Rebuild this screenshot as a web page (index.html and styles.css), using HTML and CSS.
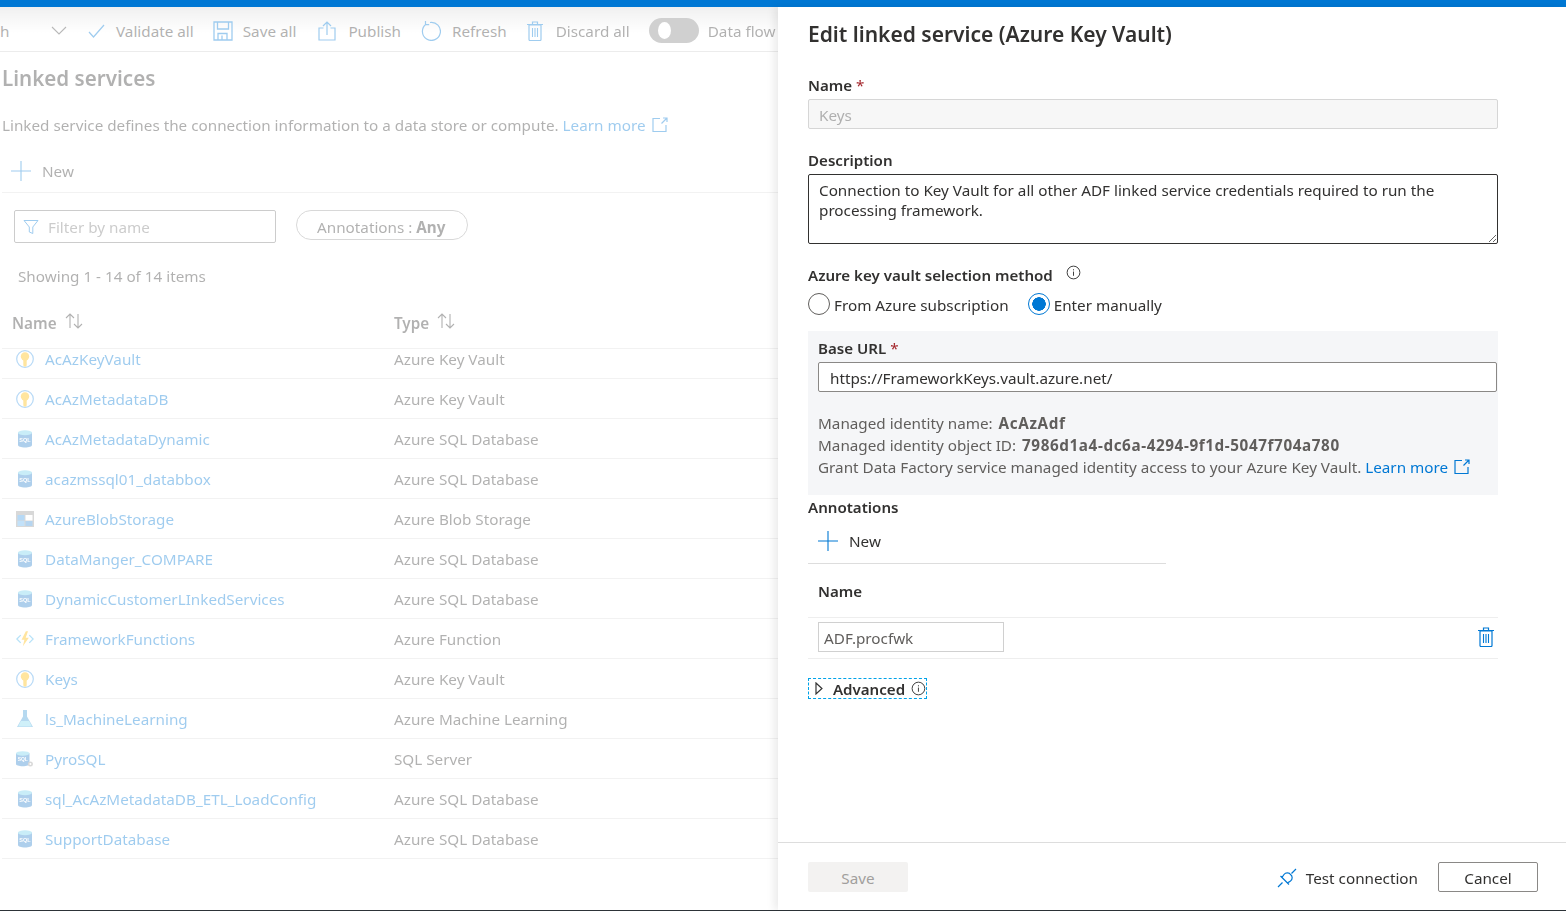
FILE: index.html
```html
<!DOCTYPE html>
<html lang="en">
<head>
  <meta charset="UTF-8">
  <meta name="viewport" content="width=device-width, initial-scale=1.0">
  <title>Edit linked service</title>
  <link rel="stylesheet" href="styles.css">
</head>
<body>
  <svg class="icon-defs" width="0" height="0">
    <defs>
      <symbol id="i-key" viewBox="0 0 18 18">
        <circle cx="9" cy="9" r="8.300" fill="#fff" stroke="#3f9be8" stroke-width="1.200"/>
        <circle cx="9" cy="6.500" r="4.200" fill="#ffb900"/>
        <path d="M7.300 9h3.400v6.500L9 17l-1.700-1.500z" fill="#ffb900"/>
      </symbol>
      <symbol id="i-sql" viewBox="0 0 18 18">
        <path d="M2 2.500v12.500c0 1.400 3 2.500 7 2.500s7-1.100 7-2.500V2.500z" fill="#2a80cc"/>
        <ellipse cx="9" cy="2.800" rx="7" ry="2.500" fill="#6fd0ec"/>
        <text x="9" y="12" class="sql-text">SQL</text>
      </symbol>
      <symbol id="i-sqlserver" viewBox="0 0 20 18">
        <path d="M0 2.500v12c0 1.400 3 2.500 7.500 2.500s7.500-1.100 7.500-2.500v-12z" fill="#2a80cc"/>
        <ellipse cx="7.500" cy="2.800" rx="7.500" ry="2.500" fill="#6fd0ec"/>
        <text x="7.500" y="11.500" class="sql-text">SQL</text>
        <circle cx="16" cy="14.500" r="2.800" fill="#999"/>
        <circle cx="16" cy="14.500" r="1.100" fill="#fff"/>
      </symbol>
      <symbol id="i-blob" viewBox="0 0 18 18">
        <path d="M0 1h18v16H0z" fill="#999"/>
        <path d="M1.500 5h7v5.500h-7z" fill="#3f9be8"/>
        <path d="M9.500 5h7v5.500h-7z" fill="#fff"/>
        <path d="M1.500 11h7v5h-7z" fill="#5fb0ee"/>
        <path d="M9.500 11h7v5h-7z" fill="#3f8fd6"/>
      </symbol>
      <symbol id="i-func" viewBox="0 0 21 18">
        <path d="M5.500 4.500 1 9l4.500 4.500M15.500 4.500 20 9l-4.500 4.500" fill="none" stroke="#3fb2ec" stroke-width="1.500"/>
        <path d="M11.500 0 6.500 10h3.300L8 17.500 15 7.500h-3.700L14 0z" fill="#ffb900"/>
      </symbol>
      <symbol id="i-flask" viewBox="0 0 18 18">
        <path d="M7 0h4v6.500l6 10.500H1l6-10.500z" fill="#3f9bd8"/>
        <path d="M4.800 11h8.400l2.600 5.500H2.200z" fill="#7fd6ef"/>
      </symbol>
      <symbol id="i-ext" viewBox="0 0 16 16">
        <path d="M8 1.500H1v13h13V8M9.500 6.500l5-5M11 1h4v4" fill="none" stroke="currentColor" stroke-width="1.200"/>
      </symbol>
      <symbol id="i-info" viewBox="0 0 16 16">
        <circle cx="8" cy="8" r="6.800" fill="none" stroke="currentColor"/>
        <path d="M8 7v4.500M8 4.500v1.200" fill="none" stroke="currentColor"/>
      </symbol>
      <symbol id="i-plus" viewBox="0 0 20 20">
        <path d="M10 0v20M0 10h20" fill="none" stroke="#0078d4" stroke-width="1.100"/>
      </symbol>
      <symbol id="i-trash" viewBox="0 0 16 20">
        <path d="M2 4h12v14.500a1 1 0 0 1-1 1H3a1 1 0 0 1-1-1zM0 3.500h16M5.500 3V1h5v2" fill="none" stroke="#0078d4" stroke-width="1.200"/>
        <path d="M5.500 7v9M8 7v9M10.500 7v9" fill="none" stroke="#0078d4" stroke-width="1.100"/>
      </symbol>
    </defs>
  </svg>

  <div class="topbar"></div>
  <div class="main">
    <div class="factory">
      <div class="toolbar">
        <span class="tool-cut">h</span>
        <svg class="chevron" width="16" height="9" viewBox="0 0 16 9"><path d="M1 1l7 7 7-7" fill="none" stroke="#444" stroke-width="1.100"/></svg>
        <span class="tool tool-validate">
          <svg width="17" height="14" viewBox="0 0 17 14"><path d="M1 8l4.500 5L16 1" fill="none" stroke="#0078d4" stroke-width="1.200"/></svg>
          Validate all
        </span>
        <span class="tool tool-save">
          <svg width="20" height="20" viewBox="0 0 20 20"><path d="M1 1h18v18H1zM4.500 1v7h11V1M5 19v-6.500h9V19M9 14.500V19" fill="none" stroke="#0078d4" stroke-width="1.300"/></svg>
          Save all
        </span>
        <span class="tool tool-publish">
          <svg width="18" height="20" viewBox="0 0 18 20"><path d="M5.500 7H1v12h16V7h-4.500M9 14V1M5 5l4-4 4 4" fill="none" stroke="#0078d4" stroke-width="1.200"/></svg>
          Publish
        </span>
        <span class="tool tool-refresh">
          <svg width="20" height="20" viewBox="0 0 20 20"><path d="M5 3.200a9 9 0 1 0 4-1.700M4.500 0v3.700h3.700" fill="none" stroke="#0078d4" stroke-width="1.200"/></svg>
          Refresh
        </span>
        <span class="tool tool-discard">
          <svg width="16" height="20" viewBox="0 0 16 20"><use href="#i-trash"/></svg>
          Discard all
        </span>
        <span class="toggle"><span class="toggle-knob"></span></span>
        <span class="tool tool-flow">Data flow</span>
      </div>

      <h1 class="page-title">Linked services</h1>
      <p class="page-desc">
        Linked service defines the connection information to a data store or compute.
        <a class="link">Learn more</a>
        <svg class="ext-icon" width="16" height="16"><use href="#i-ext"/></svg>
      </p>

      <div class="new-bar">
        <svg width="20" height="20"><use href="#i-plus"/></svg>
        <span>New</span>
      </div>

      <div class="filter-row">
        <div class="filter-box">
          <svg width="16" height="16" viewBox="0 0 16 16"><path d="M1 1.500h14L9.800 8v6.500l-3.500-1.500V8z" fill="none" stroke="#0078d4"/></svg>
          <span>Filter by name</span>
        </div>
        <div class="filter-pill">Annotations : <b>Any</b></div>
      </div>

      <div class="showing">Showing 1 - 14 of 14 items</div>

      <div class="grid-head">
        <span class="col-name">Name
          <svg width="18" height="16" viewBox="0 0 18 16"><path d="M5 15V1M1 5l4-4 4 4M13 1v14M9 11l4 4 4-4" fill="none" stroke="#333" stroke-width="1.100"/></svg>
        </span>
        <span>Type
          <svg width="18" height="16" viewBox="0 0 18 16"><path d="M5 15V1M1 5l4-4 4 4M13 1v14M9 11l4 4 4-4" fill="none" stroke="#333" stroke-width="1.100"/></svg>
        </span>
      </div>

      <div class="grid-body">
        <div class="row row-first"><a class="cell-name"><svg class="ls-icon"><use href="#i-key"/></svg>AcAzKeyVault</a><span>Azure Key Vault</span></div>
        <div class="row"><a class="cell-name"><svg class="ls-icon"><use href="#i-key"/></svg>AcAzMetadataDB</a><span>Azure Key Vault</span></div>
        <div class="row"><a class="cell-name"><svg class="ls-icon"><use href="#i-sql"/></svg>AcAzMetadataDynamic</a><span>Azure SQL Database</span></div>
        <div class="row"><a class="cell-name"><svg class="ls-icon"><use href="#i-sql"/></svg>acazmssql01_databbox</a><span>Azure SQL Database</span></div>
        <div class="row"><a class="cell-name"><svg class="ls-icon"><use href="#i-blob"/></svg>AzureBlobStorage</a><span>Azure Blob Storage</span></div>
        <div class="row"><a class="cell-name"><svg class="ls-icon"><use href="#i-sql"/></svg>DataManger_COMPARE</a><span>Azure SQL Database</span></div>
        <div class="row"><a class="cell-name"><svg class="ls-icon"><use href="#i-sql"/></svg>DynamicCustomerLInkedServices</a><span>Azure SQL Database</span></div>
        <div class="row"><a class="cell-name"><svg class="ls-icon"><use href="#i-func"/></svg>FrameworkFunctions</a><span>Azure Function</span></div>
        <div class="row"><a class="cell-name"><svg class="ls-icon"><use href="#i-key"/></svg>Keys</a><span>Azure Key Vault</span></div>
        <div class="row"><a class="cell-name"><svg class="ls-icon"><use href="#i-flask"/></svg>ls_MachineLearning</a><span>Azure Machine Learning</span></div>
        <div class="row"><a class="cell-name"><svg class="ls-icon"><use href="#i-sqlserver"/></svg>PyroSQL</a><span>SQL Server</span></div>
        <div class="row"><a class="cell-name"><svg class="ls-icon"><use href="#i-sql"/></svg>sql_AcAzMetadataDB_ETL_LoadConfig</a><span>Azure SQL Database</span></div>
        <div class="row"><a class="cell-name"><svg class="ls-icon"><use href="#i-sql"/></svg>SupportDatabase</a><span>Azure SQL Database</span></div>
      </div>
    </div>

    <div class="panel">
      <div class="panel-form">
        <h2 class="panel-title">Edit linked service (Azure Key Vault)</h2>

        <label class="label label-name">Name <span class="req">*</span></label>
        <input class="text-input is-disabled" type="text" value="Keys" disabled>

        <label class="label label-gap">Description</label>
        <textarea class="desc-input" readonly>Connection to Key Vault for all other ADF linked service credentials required to run the processing framework.</textarea>

        <div class="label label-gap">Azure key vault selection method
          <svg class="info-icon info-method" width="15" height="15"><use href="#i-info"/></svg>
        </div>
        <div class="radio-row">
          <span class="radio"></span><span class="radio-text">From Azure subscription</span>
          <span class="radio is-on"></span><span class="radio-text">Enter manually</span>
        </div>

        <div class="url-box">
          <label class="label">Base URL <span class="req">*</span></label>
          <input class="text-input url-input" type="text" value="https://FrameworkKeys.vault.azure.net/" readonly>
          <div class="identity">
            <div>Managed identity name: <b>AcAzAdf</b></div>
            <div>Managed identity object ID: <b>7986d1a4-dc6a-4294-9f1d-5047f704a780</b></div>
            <div>Grant Data Factory service managed identity access to your Azure Key Vault. <a class="link">Learn more</a>
              <svg class="ext-icon ext-blue" width="16" height="16"><use href="#i-ext"/></svg>
            </div>
          </div>
        </div>

        <div class="label anno-label">Annotations</div>
        <div class="anno-new">
          <svg width="20" height="20"><use href="#i-plus"/></svg>
          <span>New</span>
        </div>
        <div class="anno-head">Name</div>
        <div class="anno-row">
          <input class="anno-input" type="text" value="ADF.procfwk" readonly>
          <svg width="16" height="20"><use href="#i-trash"/></svg>
        </div>

        <div class="advanced">
          <svg width="8" height="13" viewBox="0 0 8 13"><path d="M1 1l6 5.500L1 12z" fill="none" stroke="#333" stroke-width="1.200"/></svg>
          <span>Advanced</span>
          <svg class="info-icon" width="15" height="15"><use href="#i-info"/></svg>
        </div>
      </div>

      <div class="panel-footer">
        <button class="btn-save" type="button" disabled>Save</button>
        <div class="footer-right">
          <span class="test-conn">
            <svg width="20" height="20" viewBox="0 0 20 20"><path d="M1 19l4.500-4.500M14.500 5.500 19 1M5 9.500l5.500 5.500 3-2a4 4 0 0 0 0-6.500 4 4 0 0 0-6.500 0zM3.500 8l8.500 8.500" fill="none" stroke="#0078d4" stroke-width="1.200"/></svg>
            Test connection
          </span>
          <button class="btn-cancel" type="button">Cancel</button>
        </div>
      </div>
    </div>
  </div>
  <div class="bottom-line"></div>
</body>
</html>
```

FILE: styles.css
```css
body {
  margin: 0;
  height: 911px;
  overflow: hidden;
  background: #fff;
  font-family: "Noto Sans", "Open Sans", Arial, sans-serif;
  font-size: 15.25px;
  color: #323130;
}
.icon-defs {
  position: absolute;
}
.sql-text {
  font-family: "Liberation Sans", Arial, sans-serif;
  font-size: 5.500px;
  font-weight: 700;
  fill: #fff;
  text-anchor: middle;
}
.topbar {
  height: 7px;
  background: #0078d4;
}
.main {
  display: flex;
  height: 903px;
}
.bottom-line {
  height: 1px;
  background: #2d3338;
}
.link {
  color: #0078d4;
}

/* faded page behind the panel */
.factory {
  width: 778px;
  flex: none;
  overflow: hidden;
  opacity: 0.38;
}
.toolbar {
  display: flex;
  align-items: center;
  height: 41px;
  padding-top: 3px;
  border-bottom: 1px solid #ccc;
  background: linear-gradient(#d8d8d8, #fff 60%);
  white-space: nowrap;
}
.tool-cut {
  width: 9px;
}
.chevron {
  margin-left: 42px;
}
.tool {
  display: flex;
  align-items: center;
  margin-left: 20px;
}
.tool-validate {
  gap: 11px;
  margin-left: 21px;
}
.tool-save {
  gap: 10px;
  margin-left: 19px;
}
.tool-publish {
  gap: 12px;
  margin-left: 22px;
}
.tool-refresh {
  gap: 11px;
}
.tool-discard {
  gap: 13px;
}
.toggle {
  display: flex;
  align-items: center;
  width: 50px;
  height: 25px;
  margin-left: 19px;
  border-radius: 13px;
  background: #838383;
}
.toggle-knob {
  width: 13px;
  height: 17px;
  margin-left: 9px;
  border-radius: 50%;
  background: #fff;
}
.tool-flow {
  margin-left: 9px;
}
.page-title {
  margin: 12px 0 0 2px;
  font-size: 20.600px;
  line-height: 28px;
  font-weight: 600;
}
.page-desc {
  margin: 23px 0 0 2px;
  line-height: 20px;
}
.ext-icon {
  vertical-align: -2px;
  margin-left: 3px;
  color: #0078d4;
}
.new-bar {
  display: flex;
  align-items: center;
  gap: 11px;
  margin: 25px 0 0 2px;
  padding: 0 0 10px 9px;
  height: 22px;
  border-bottom: 1px solid #ddd;
}
.filter-row {
  display: flex;
  gap: 20px;
  margin: 17px 0 0 14px;
  align-items: flex-start;
}
.filter-box {
  display: flex;
  align-items: center;
  gap: 9px;
  box-sizing: border-box;
  width: 262px;
  height: 33px;
  padding: 1px 0 0 8px;
  border: 1px solid #777;
  border-radius: 2px;
  color: #777;
}
.filter-pill {
  height: 28px;
  line-height: 33px;
  padding: 0 22px 0 20px;
  border: 1px solid #999;
  border-radius: 15px;
}
.showing {
  margin: 23px 0 0 18px;
  line-height: 20px;
}
.grid-head {
  display: grid;
  grid-template-columns: 382px 1fr;
  margin: 27px 0 0 12px;
  height: 35px;
  line-height: 20px;
  font-weight: 600;
}
.grid-head svg {
  margin-left: 4px;
  vertical-align: 0;
}
.grid-body {
  margin-left: 2px;
}
.row {
  display: grid;
  grid-template-columns: 392px 1fr;
  align-items: center;
  height: 38px;
  padding-top: 1px;
  border-bottom: 1px solid #ddd;
}
.row-first {
  height: 17px;
  padding-top: 0;
  padding-bottom: 12px;
  border-top: 1px solid #ddd;
}
.cell-name {
  display: flex;
  align-items: center;
  padding-left: 14px;
  color: #0078d4;
}
.ls-icon {
  width: 18px;
  height: 18px;
  margin-right: 11px;
  flex: none;
}

/* edit panel */
.panel {
  flex: 1;
  display: flex;
  flex-direction: column;
  background: #fff;
  box-shadow: -4px 0 8px rgba(0, 0, 0, 0.08);
  position: relative;
}
.panel-form {
  flex: 1;
  width: 690px;
  padding: 12px 0 0 30px;
}
.panel-title {
  margin: 0;
  font-size: 21px;
  line-height: 30px;
  font-weight: 600;
}
.label {
  display: block;
  line-height: 20px;
  font-size: 15.100px;
  font-weight: 600;
}
.label-name {
  margin-top: 26px;
}
.label-gap {
  margin-top: 21px;
}
.req {
  color: #a4262c;
  font-weight: 400;
}
.text-input {
  display: block;
  box-sizing: border-box;
  width: 100%;
  height: 30px;
  margin-top: 4px;
  padding: 2px 10px 0;
  border: 1px solid #8a8886;
  border-radius: 2px;
  font: inherit;
  font-size: 15.250px;
  font-weight: 400;
  color: #323130;
  background: #fff;
}
.is-disabled {
  border-color: #d6d6d6;
  background: #f7f7f7;
  color: #b0b0b0;
}
.desc-input {
  display: block;
  box-sizing: border-box;
  width: 100%;
  height: 70px;
  margin-top: 4px;
  padding: 5px 10px;
  border: 1px solid #323130;
  border-radius: 2px;
  font: inherit;
  line-height: 20px;
  color: #323130;
}
.info-icon {
  color: #333;
  vertical-align: -1px;
}
.info-method {
  margin-left: 9px;
  vertical-align: 1px;
}
.radio-row {
  display: flex;
  align-items: center;
  height: 22px;
  margin-top: 8px;
}
.radio {
  box-sizing: border-box;
  width: 22px;
  height: 22px;
  border: 1px solid #605e5c;
  border-radius: 50%;
}
.radio.is-on {
  margin-left: 19px;
  border-color: #0078d4;
  background: radial-gradient(circle, #0078d4 0 6.500px, #fff 7px);
}
.radio-text {
  margin-left: 4px;
  padding-top: 2px;
}
.url-box {
  height: 157px;
  margin-top: 16px;
  padding: 7px 1px 0 10px;
  background: #f5f6f8;
}
.url-input {
  padding-left: 11px;
}
.identity {
  margin-top: 20px;
  line-height: 22px;
  color: #605e5c;
}
.identity b {
  margin-left: 2px;
  letter-spacing: 0.600px;
}
.identity .ext-blue {
  margin-left: 2px;
}
.anno-label {
  margin-top: 2px;
}
.anno-new {
  display: flex;
  align-items: center;
  gap: 11px;
  width: 348px;
  height: 22px;
  margin-top: 13px;
  padding: 0 0 11px 10px;
  border-bottom: 1px solid #ddd;
}
.anno-head {
  padding: 17px 0 16px 10px;
  line-height: 20px;
  font-size: 15.100px;
  font-weight: 600;
  border-bottom: 1px solid #eee;
}
.anno-row {
  display: flex;
  align-items: center;
  justify-content: space-between;
  padding: 4px 4px 6px 10px;
  border-bottom: 1px solid #eee;
}
.anno-input {
  box-sizing: border-box;
  width: 186px;
  height: 30px;
  padding: 2px 5px 0;
  border: 1px solid #d0d0d0;
  font: inherit;
  color: #605e5c;
}
.advanced {
  display: inline-flex;
  align-items: center;
  gap: 6px;
  box-sizing: border-box;
  width: 119px;
  height: 21px;
  margin-top: 19px;
  padding-left: 6px;
  border: 1px dashed #00a2e8;
  font-size: 15.100px;
  font-weight: 600;
}
.advanced span {
  margin-left: 4px;
}
.panel-footer {
  display: flex;
  justify-content: space-between;
  align-items: flex-start;
  height: 48px;
  padding: 19px 28px 0 30px;
  border-top: 1px solid #ddd;
}
.btn-save,
.btn-cancel {
  width: 100px;
  height: 30px;
  padding-top: 2px;
  border-radius: 2px;
  font: inherit;
}
.btn-save {
  border: none;
  background: #f3f2f1;
  color: #a19f9d;
}
.btn-cancel {
  border: 1px solid #8a8886;
  background: #fff;
  color: #323130;
}
.footer-right {
  display: flex;
  align-items: center;
  gap: 20px;
  height: 30px;
}
.test-conn {
  display: flex;
  align-items: center;
  gap: 9px;
  padding-top: 2px;
}
```
